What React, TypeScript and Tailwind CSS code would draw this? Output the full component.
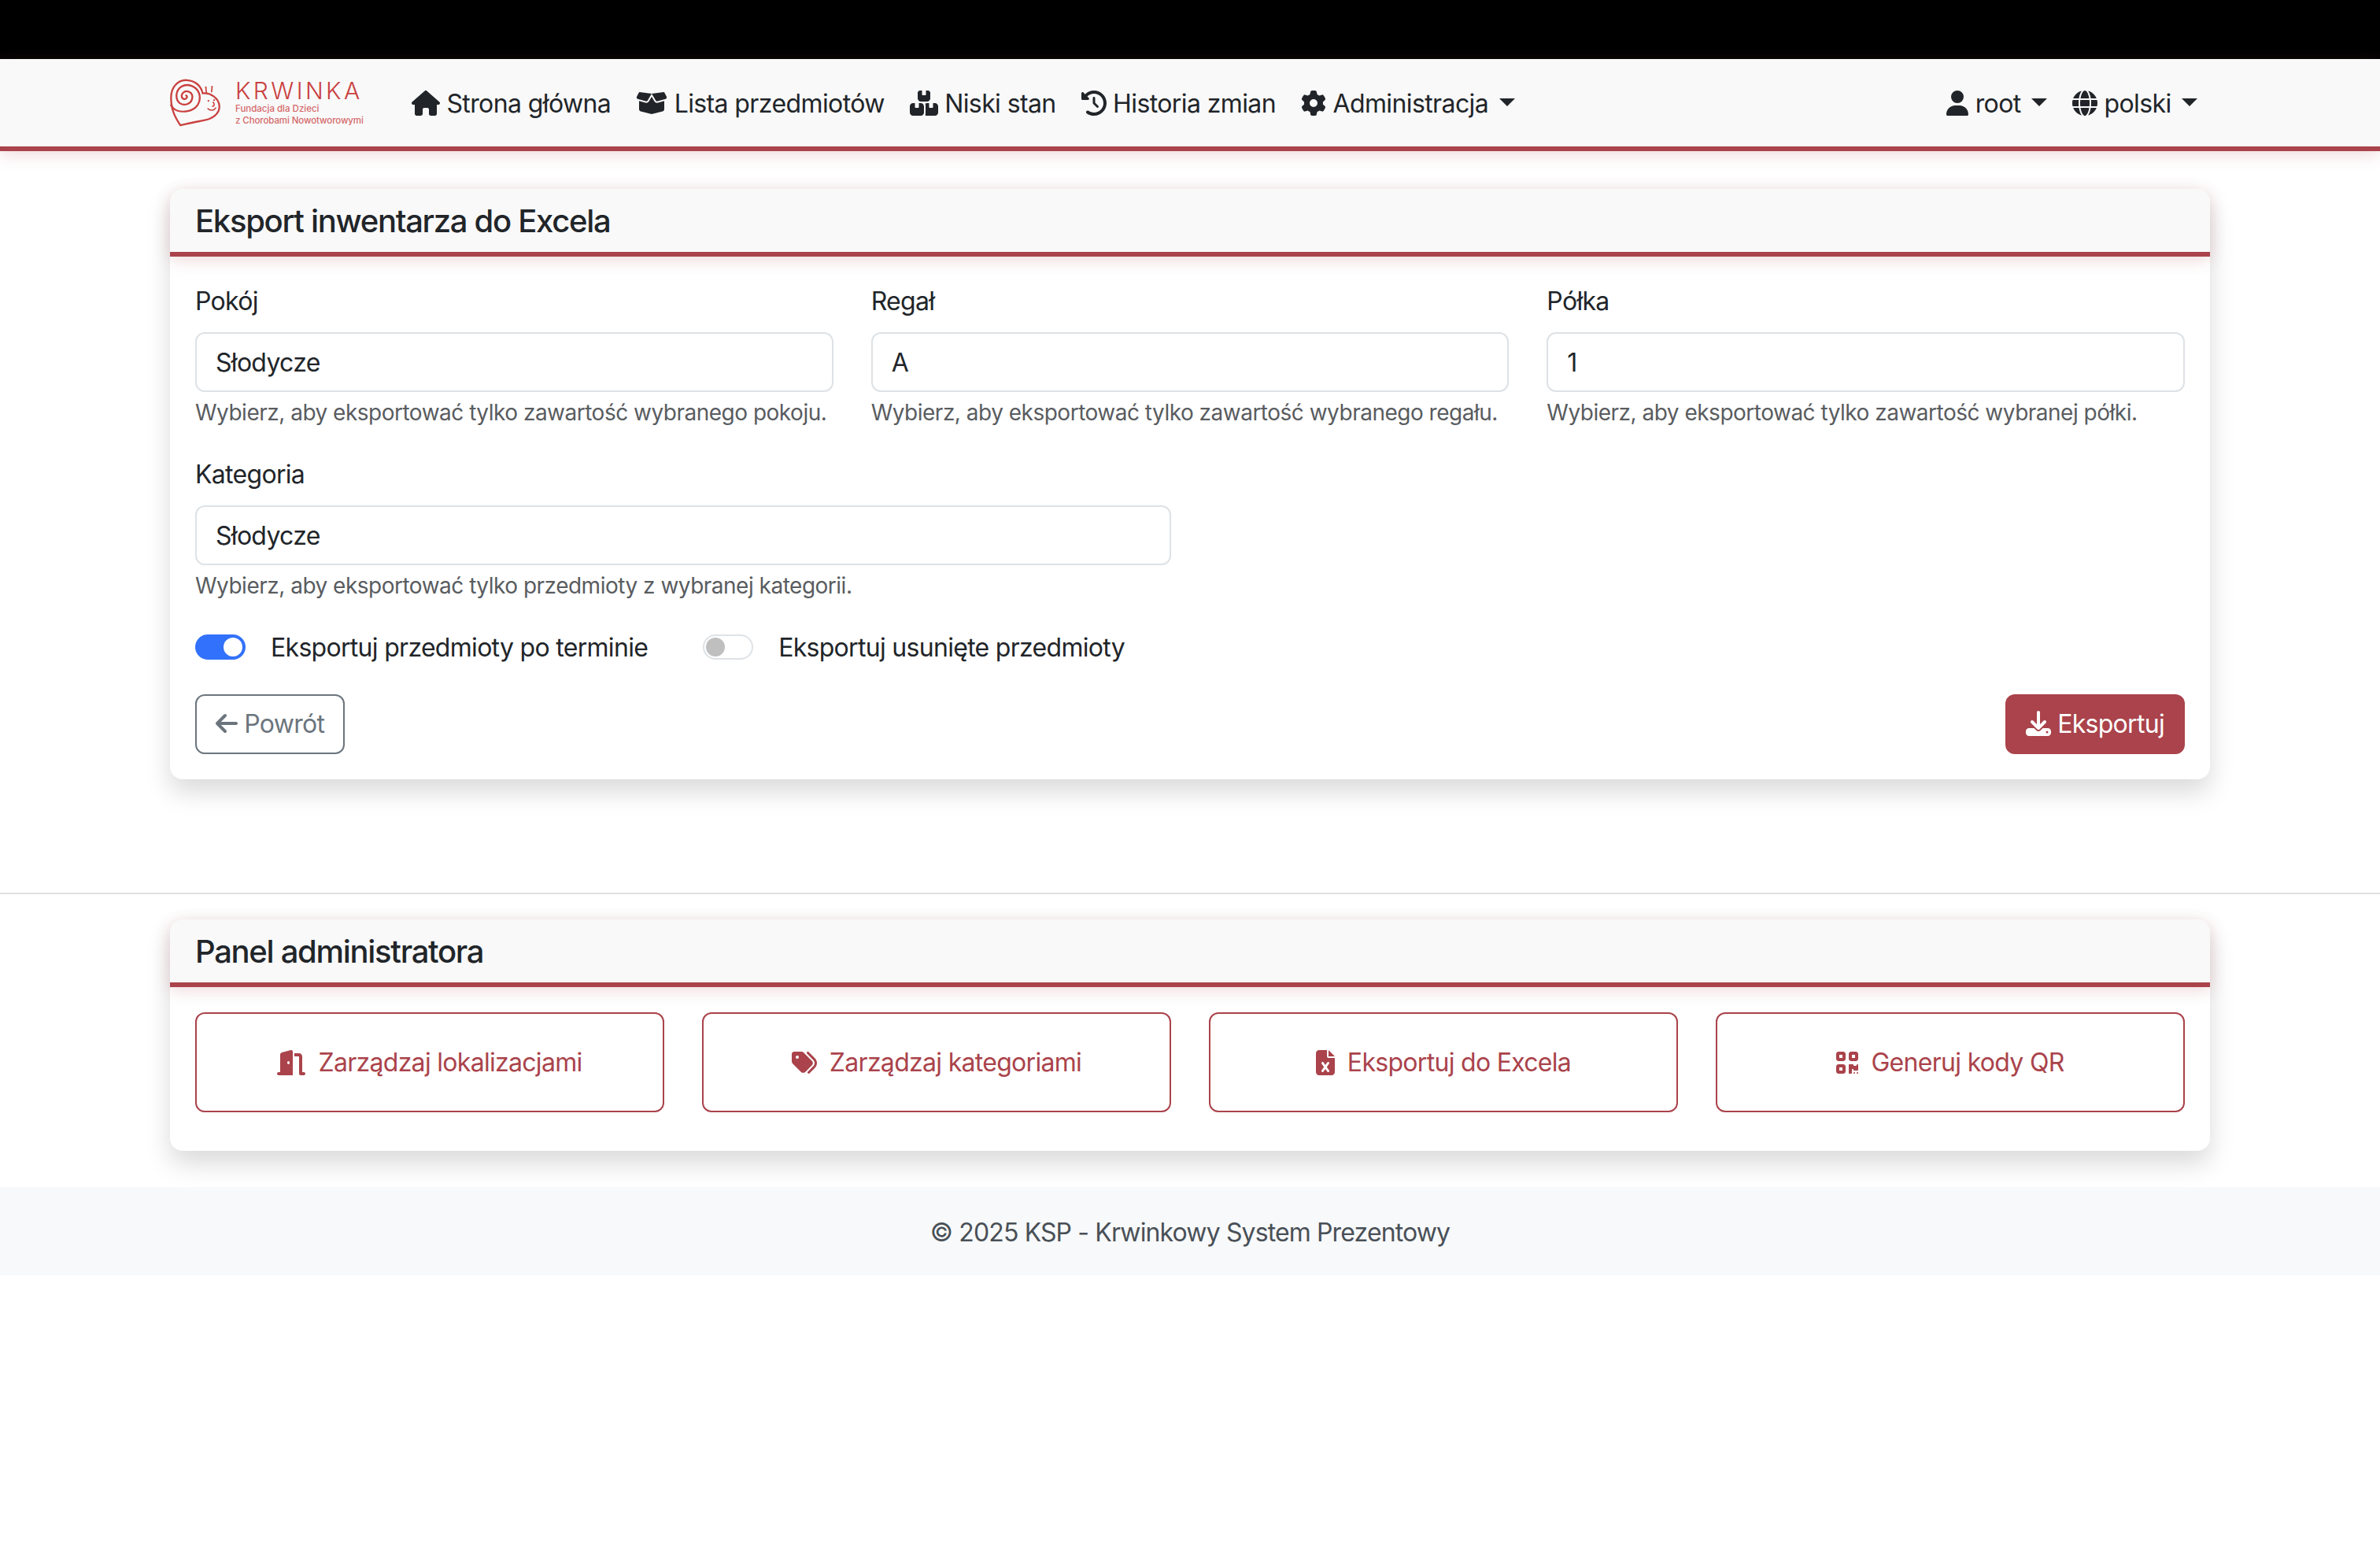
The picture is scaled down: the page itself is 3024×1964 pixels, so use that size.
import React from "react";
import {
  FaHouse, FaBoxOpen, FaBoxesStacked, FaClockRotateLeft, FaGear, FaUser, FaGlobe,
  FaArrowLeft, FaDownload, FaDoorOpen, FaTags, FaFileExcel, FaQrcode,
} from "react-icons/fa6";

function Caret() {
  return (
    <span className="inline-block ml-[5px] align-[8px] w-0 h-0 border-t-[10px] border-x-[10px] border-x-transparent border-t-current" />
  );
}

function Logo() {
  return (
    <div className="flex items-center w-[246px] h-[64px] shrink-0">
      <svg viewBox="20 28 200 184" className="w-[66px] h-[61px] shrink-0" fill="none" stroke="#c9403f" strokeWidth="7" strokeLinecap="round" strokeLinejoin="round">
        <path d="M60 207 C42 180 24 150 24 100 C24 58 52 32 84 33 C116 34 140 55 146 84 C172 80 208 100 210 132 C212 165 180 182 150 188 C118 194 88 200 60 207 Z" />
        <path d="M24 130 C36 150 60 158 88 152 C122 146 142 118 132 84 C122 56 88 44 64 58 C42 72 38 106 58 122 C76 134 104 124 106 100 C108 80 84 68 70 82 C60 92 66 108 78 106 C86 104 88 96 82 92" />
        <path d="M160 80 L158 62 M180 78 L182 60" strokeWidth="5" />
        <circle cx="158" cy="60" r="3" fill="#c9403f" stroke="none" />
        <circle cx="182" cy="58" r="3" fill="#c9403f" stroke="none" />
        <circle cx="168" cy="113" r="3.5" fill="#c9403f" stroke="none" />
        <circle cx="190" cy="110" r="3.5" fill="#c9403f" stroke="none" />
        <path d="M186 118 C192 126 192 132 184 134 M166 143 C176 152 190 150 196 140" strokeWidth="5" />
      </svg>
      <div className="ml-[17px] flex flex-col font-['Inter',sans-serif] text-[#c9403f] whitespace-nowrap tracking-normal">
        <span className="text-[30px] leading-[30px] font-light tracking-[3.4px]">KRWINKA</span>
        <span className="mt-[1px] text-[11.5px] leading-[15px] font-medium text-[#d4686a]">Fundacja dla Dzieci</span>
        <span className="text-[11.5px] leading-[15px] font-medium text-[#d4686a] tracking-[-0.1px]">z Chorobami Nowotworowymi</span>
      </div>
    </div>
  );
}

function NavItem({ icon, label, caret }: { icon: React.ReactNode; label: string; caret?: boolean }) {
  return (
    <a className="px-[16px] pt-[9px] pb-[7px] leading-[48px] tracking-[-0.6px] whitespace-nowrap text-[#212529]">
      {icon} {label}
      {caret ? <> <Caret /></> : null}
    </a>
  );
}

function Field({ label, value, help }: { label: string; value: string; help: string }) {
  return (
    <div>
      <div className="leading-[48px] mb-[16px] pt-[1px] h-[48px] text-[#212529]">{label}</div>
      <div className="h-[76px] border-2 border-[#dee2e6] rounded-[12px] px-[24px] pt-[2px] flex items-center bg-white text-[#212529]">{value}</div>
      <div className="mt-[5px] h-[41px] text-[28px] leading-[42px] tracking-[-0.5px] text-[#595c5f] whitespace-nowrap">{help}</div>
    </div>
  );
}

function Card({ title, className, children }: { title: string; className?: string; children: React.ReactNode }) {
  return (
    <section className={"mx-[216px] rounded-[16px] bg-white shadow-[0_16px_32px_rgba(0,0,0,0.15)] " + (className ?? "")}>
      <header className="h-[86px] px-[32px] pt-[2px] bg-[#f9f9f9] rounded-t-[16px] border-b-[6px] border-[#aa434b] shadow-[0_4px_20px_rgba(170,67,75,0.2)] flex items-center">
        <h2 className="text-[40px] leading-[48px] font-medium tracking-[-1.3px] text-[#212529]">{title}</h2>
      </header>
      {children}
    </section>
  );
}

function Toggle({ on, label }: { on: boolean; label: string }) {
  return (
    <div className="flex items-center h-[48px]">
      {on ? (
        <span className="w-[64px] h-[32px] rounded-full bg-[#3271fb] flex items-center justify-end pr-[4px]">
          <span className="w-[24px] h-[24px] rounded-full bg-white" />
        </span>
      ) : (
        <span className="w-[64px] h-[32px] rounded-full border-2 border-[#dee2e6] bg-white flex items-center pl-[2px]">
          <span className="w-[24px] h-[24px] rounded-full bg-[#bfbfbf]" />
        </span>
      )}
      <span className="ml-[32px] pt-[1px] text-[#212529] whitespace-nowrap">{label}</span>
    </div>
  );
}

function PanelButton({ icon, label }: { icon: React.ReactNode; label: string }) {
  return (
    <a className="h-[127px] border-2 border-[#aa434b] rounded-[12px] flex items-center justify-center text-[#aa434b] whitespace-pre">
      <span className="inline-flex items-center">
        {icon}
        <span className="ml-[16px] pt-[1px]">{label}</span>
      </span>
    </a>
  );
}

const ic = "inline-block h-[32px] align-[-4px]";

export default function App() {
  return (
    <div className="font-['Inter',sans-serif] text-[32px] leading-[48px] tracking-[-0.7px] bg-white min-h-[1964px]">
      <div className="h-[75px] bg-black" />
      <nav className="h-[117px] bg-[#f9f9f9] border-b-[6px] border-[#aa434b] shadow-[0_4px_20px_rgba(170,67,75,0.2)] px-[216px] flex items-center">
        <Logo />
        <div className="ml-[45px] flex items-center">
          <NavItem icon={<FaHouse className={ic + " w-[36px]"} />} label="Strona główna" />
          <NavItem icon={<FaBoxOpen className={ic + " w-[40px]"} />} label="Lista przedmiotów" />
          <NavItem icon={<FaBoxesStacked className={ic + " w-[36px]"} />} label="Niski stan" />
          <NavItem icon={<FaClockRotateLeft className={ic + " w-[32px]"} />} label="Historia zmian" />
          <NavItem icon={<FaGear className={ic + " w-[32px]"} />} label="Administracja" caret />
        </div>
        <div className="ml-auto flex items-center">
          <NavItem icon={<FaUser className={ic + " w-[28px]"} />} label="root" caret />
          <NavItem icon={<FaGlobe className={ic + " w-[32px]"} />} label="polski" caret />
        </div>
      </nav>

      <Card title="Eksport inwentarza do Excela" className="mt-[48px]">
        <div className="p-[32px]">
          <div className="grid grid-cols-3 gap-x-[48px]">
            <Field label="Pokój" value="Słodycze" help="Wybierz, aby eksportować tylko zawartość wybranego pokoju." />
            <Field label="Regał" value="A" help="Wybierz, aby eksportować tylko zawartość wybranego regału." />
            <Field label="Półka" value="1" help="Wybierz, aby eksportować tylko zawartość wybranej półki." />
          </div>
          <div className="grid grid-cols-2 gap-x-[48px] mt-[34px]">
            <Field label="Kategoria" value="Słodycze" help="Wybierz, aby eksportować tylko przedmioty z wybranej kategorii." />
          </div>
          <div className="flex items-center gap-x-[70px] mt-[34px]">
            <Toggle on label="Eksportuj przedmioty po terminie" />
            <Toggle on={false} label="Eksportuj usunięte przedmioty" />
          </div>
          <div className="flex justify-between mt-[36px]">
            <a className="h-[76px] px-[24px] border-2 border-[#6c757d] rounded-[12px] flex items-center text-[#6c757d] whitespace-pre">
              <span><FaArrowLeft className={ic + " w-[28px]"} /> Powrót</span>
            </a>
            <a className="h-[76px] px-[26px] bg-[#aa434b] rounded-[12px] flex items-center text-white whitespace-pre">
              <span><FaDownload className={ic + " w-[32px]"} /> Eksportuj</span>
            </a>
          </div>
        </div>
      </Card>

      <hr className="mt-[144px] border-t-2 border-[#e0e0e0]" />

      <Card title="Panel administratora" className="mt-[32px]">
        <div className="pt-[32px] px-[32px] pb-[49px] grid grid-cols-4 gap-x-[48px]">
          <PanelButton icon={<FaDoorOpen className="h-[32px] w-[36px]" />} label="Zarządzaj lokalizacjami" />
          <PanelButton icon={<FaTags className="h-[32px] w-[32px]" />} label="Zarządzaj kategoriami" />
          <PanelButton icon={<FaFileExcel className="h-[32px] w-[24px]" />} label="Eksportuj do Excela" />
          <PanelButton icon={<FaQrcode className="h-[32px] w-[28px]" />} label="Generuj kody QR" />
        </div>
      </Card>

      <footer className="mt-[46px] h-[112px] pt-[3px] bg-[#f8f9fa] flex items-center justify-center tracking-[-0.87px] text-[#495057]">
        © 2025 KSP - Krwinkowy System Prezentowy
      </footer>
    </div>
  );
}
